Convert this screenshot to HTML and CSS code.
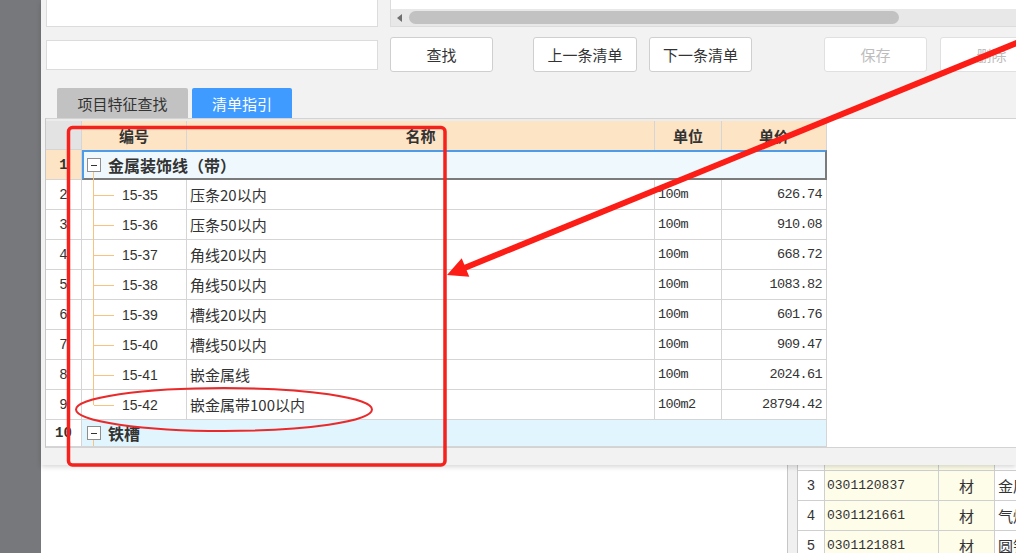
FILE: index.html
```html
<!DOCTYPE html>
<html lang="zh-CN">
<head>
<meta charset="utf-8">
<title>清单指引</title>
<link rel="stylesheet" href="styles.css">
</head>
<body>
<div class="app">
  <div class="sidebar"></div>
  <div class="main">
    <div class="top">
      <div class="row-top">
        <div class="memo"></div>
        <div class="hpanel">
          <div class="hpanel-body"></div>
          <div class="hscroll"><span class="arrow-left"></span><span class="thumb"></span></div>
        </div>
      </div>
      <div class="row-search">
        <div class="search-input"></div>
        <button class="btn">查找</button>
        <button class="btn btn-prev">上一条清单</button>
        <button class="btn btn-next">下一条清单</button>
        <button class="btn btn-save disabled">保存</button>
        <button class="btn btn-del disabled">删除</button>
      </div>
      <div class="tabs">
        <div class="tab">项目特征查找</div>
        <div class="tab active">清单指引</div>
      </div>
      <div class="grid-panel">
        <div class="grid">
          <div class="gr head">
            <div class="c num"></div><div class="c">编号</div><div class="c">名称</div><div class="c">单位</div><div class="c">单价</div>
          </div>
          <div class="gr group sel">
            <div class="c num">1</div>
            <div class="c gcell"><span class="minus"></span>金属装饰线（带）</div>
          </div>
          <div class="gr item"><div class="c num">2</div><div class="c code">15-35</div><div class="c name">压条20以内</div><div class="c unit">100m</div><div class="c price">626.74</div></div>
          <div class="gr item"><div class="c num">3</div><div class="c code">15-36</div><div class="c name">压条50以内</div><div class="c unit">100m</div><div class="c price">910.08</div></div>
          <div class="gr item"><div class="c num">4</div><div class="c code">15-37</div><div class="c name">角线20以内</div><div class="c unit">100m</div><div class="c price">668.72</div></div>
          <div class="gr item"><div class="c num">5</div><div class="c code">15-38</div><div class="c name">角线50以内</div><div class="c unit">100m</div><div class="c price">1083.82</div></div>
          <div class="gr item"><div class="c num">6</div><div class="c code">15-39</div><div class="c name">槽线20以内</div><div class="c unit">100m</div><div class="c price">601.76</div></div>
          <div class="gr item"><div class="c num">7</div><div class="c code">15-40</div><div class="c name">槽线50以内</div><div class="c unit">100m</div><div class="c price">909.47</div></div>
          <div class="gr item"><div class="c num">8</div><div class="c code">15-41</div><div class="c name">嵌金属线</div><div class="c unit">100m</div><div class="c price">2024.61</div></div>
          <div class="gr item last"><div class="c num">9</div><div class="c code">15-42</div><div class="c name">嵌金属带100以内</div><div class="c unit">100m2</div><div class="c price">28794.42</div></div>
          <div class="gr group g2">
            <div class="c num">10</div>
            <div class="c gcell"><span class="minus"></span>铁槽</div>
          </div>
        </div>
      </div>
    </div>
    <div class="bottom">
      <div class="blank"></div>
      <div class="splitter"></div>
      <div class="subgrid">
        <div class="sr partial"><div class="s snum"></div><div class="s scode"></div><div class="s stype"></div><div class="s sname"></div></div>
        <div class="sr"><div class="s snum">3</div><div class="s scode">0301120837</div><div class="s stype">材</div><div class="s sname">金属压条</div></div>
        <div class="sr"><div class="s snum">4</div><div class="s scode">0301121661</div><div class="s stype">材</div><div class="s sname">气焊条</div></div>
        <div class="sr"><div class="s snum">5</div><div class="s scode">0301121881</div><div class="s stype">材</div><div class="s sname">圆钉</div></div>
      </div>
    </div>
  </div>
</div>
<svg class="annot" width="1016" height="553" viewBox="0 0 1016 553">
  <rect x="68.5" y="127.5" width="376.5" height="337.5" rx="4" fill="none" stroke="#f5211c" stroke-width="3.5"/>
  <ellipse cx="224" cy="409.5" rx="148" ry="21.5" fill="none" stroke="#ea2a2a" stroke-width="2"/>
  <line x1="465" y1="267.7" x2="1030" y2="37.5" stroke="#fb1d16" stroke-width="6"/>
  <polygon points="447,275 469.3,276.8 461.7,258.2" fill="#fb1d16"/>
</svg>
</body>
</html>
```
FILE: styles.css
```css
* { box-sizing: border-box; margin: 0; padding: 0; }
html, body { width: 1016px; height: 553px; overflow: hidden; }
body {
  font-family: "Noto Sans CJK SC", sans-serif;
  color: #333;
  background: #f2f2f2;
  position: relative;
}
.app { display: flex; height: 553px; }
.sidebar { width: 41px; flex: none; background: #76787b; }
.main { flex: 1; min-width: 0; display: flex; flex-direction: column; }

.top {
  height: 465px;
  flex: none;
  background: #f2f2f2;
  position: relative;
  z-index: 1;
  box-shadow: 0 2px 5px rgba(0, 0, 0, 0.16);
  display: flex;
  flex-direction: column;
}

.row-top { display: flex; height: 27px; padding-left: 5px; gap: 12px; }
.memo { width: 332px; flex: none; background: #fff; border: 1px solid #dcdcdc; border-top: none; }
.hpanel { flex: 1; display: flex; flex-direction: column; border-left: 1px solid #dcdcdc; border-bottom: 1px solid #dcdcdc; }
.hpanel-body { height: 9px; background: #fff; }
.hscroll { flex: 1; background: #e8e8e8; display: flex; align-items: center; padding-left: 6px; }
.arrow-left { width: 0; height: 0; border-top: 4px solid transparent; border-bottom: 4px solid transparent; border-right: 5px solid #6f6f6f; }
.thumb { margin-left: 7px; width: 490px; height: 13px; border-radius: 7px; background: #c2c2c2; }

.row-search { display: flex; align-items: center; height: 35px; margin-top: 10px; padding-left: 5px; }
.search-input { width: 332px; height: 30px; flex: none; background: #fff; border: 1px solid #dcdcdc; margin-right: 12px; }
.btn {
  width: 103px; height: 35px; flex: none;
  background: #fff; border: 1px solid #cfcfcf; border-radius: 3px;
  font: 15px "Noto Sans CJK SC", sans-serif; color: #333;
}
.btn-prev { margin-left: 40px; width: 104px; }
.btn-next { margin-left: 12px; }
.btn-save { margin-left: 72px; }
.btn-del { margin-left: 13px; }
.btn.disabled { color: #bdbdbd; border-color: #e0e0e0; }

.tabs { display: flex; gap: 4px; height: 30px; margin-top: 16px; padding-left: 16px; }
.tab {
  width: 131px; background: #c2c2c2; color: #333;
  display: flex; align-items: center; justify-content: center;
  font-size: 15px; border-radius: 2px 2px 0 0;
}
.tab.active { width: 100px; background: #3f9bff; color: #fff; }

.grid-panel {
  margin-left: 4px;
  height: 330px;
  flex: none;
  background: #fff;
  border-top: 1px solid #d3d3d3;
  border-left: 1px solid #c8c8c8;
  border-bottom: 1px solid #d3d3d3;
}
.grid { width: 781px; }
.gr { display: grid; grid-template-columns: 36px 105px 468px 67px 105px; height: 30px; }
.c {
  position: relative;
  display: flex; align-items: center;
  border-right: 1px solid #d5d5d5; border-bottom: 1px solid #d5d5d5;
  font-size: 15px; white-space: nowrap; overflow: visible;
}
.head { height: 31px; border-top: 2px solid #ececec; }
.head .c { background: #fde4c4; font-weight: bold; justify-content: center; border-bottom: none; }
.head .num { background: #e3e3e3; border-bottom: 1px solid #d5d5d5; }

.num { justify-content: center; font: 14px "Liberation Mono", monospace; color: #333; background: #fff; }

.group .gcell { grid-column: 2 / 6; font-weight: bold; font-size: 16px; }
.sel .num { background: #fde4c4; font-weight: bold; }
.sel .gcell {
  border: 2px solid; border-color: #4c9ce9 #7b7b7b #7b7b7b #4c9ce9;
  background: #eef8fd; padding-left: 3px;
}
.sel .gcell::after { content: ""; position: absolute; left: 9px; top: 20px; bottom: -2px; width: 1px; background: #f9c27e; }
.g2 { height: 27px; }
.g2 .num { font-weight: bold; }
.g2 .gcell { background: #e0f5fd; padding-left: 5px; }
.g2 .gcell::after { content: ""; position: absolute; left: 11px; top: 20px; bottom: 0; width: 1px; background: #f9c27e; }

.minus { width: 14px; height: 14px; flex: none; border: 1px solid #8e8e8e; background: #fff; margin-right: 7px; position: relative; }
.minus::before { content: ""; position: absolute; left: 3px; right: 3px; top: 6px; height: 1px; background: #333; }

.code { padding-left: 40px; font: 14px "Liberation Sans", sans-serif; color: #333; }
.code::before { content: ""; position: absolute; left: 11px; top: 0; bottom: -1px; width: 1px; background: #f9c27e; }
.code::after { content: ""; position: absolute; left: 12px; width: 20px; top: 50%; height: 1px; background: #f9c27e; }
.last .code::before { bottom: 50%; }
.name { padding-left: 3px; }
.unit { padding-left: 3px; font: 13.5px "Liberation Mono", monospace; letter-spacing: -0.6px; }
.price { justify-content: flex-end; padding-right: 4px; font: 13.5px "Liberation Mono", monospace; letter-spacing: -0.6px; }

.bottom { flex: 1; display: flex; background: #fff; }
.blank { flex: 1; }
.splitter { width: 11px; flex: none; background: #f0f0f0; border-left: 1px solid #c6c6c6; border-right: 1px solid #c6c6c6; }
.subgrid { width: 218px; flex: none; overflow: hidden; }
.sr { display: grid; grid-template-columns: 27px 114px 56px 60px; height: 30px; }
.sr.partial { height: 6px; }
.s {
  display: flex; align-items: center; overflow: hidden; white-space: nowrap;
  border-right: 1px solid #cfcfcf; border-bottom: 1px solid #cfcfcf;
}
.snum { justify-content: center; font: 14px "Liberation Mono", monospace; background: #fff; }
.scode { background: #fdfde9; padding-left: 2px; font: 13px "Liberation Mono", monospace; }
.stype { background: #fdfde9; justify-content: center; font-size: 15px; }
.sname { padding-left: 3px; font-size: 15px; background: #fff; }

.annot { position: absolute; left: 0; top: 0; z-index: 10; pointer-events: none; }
```
